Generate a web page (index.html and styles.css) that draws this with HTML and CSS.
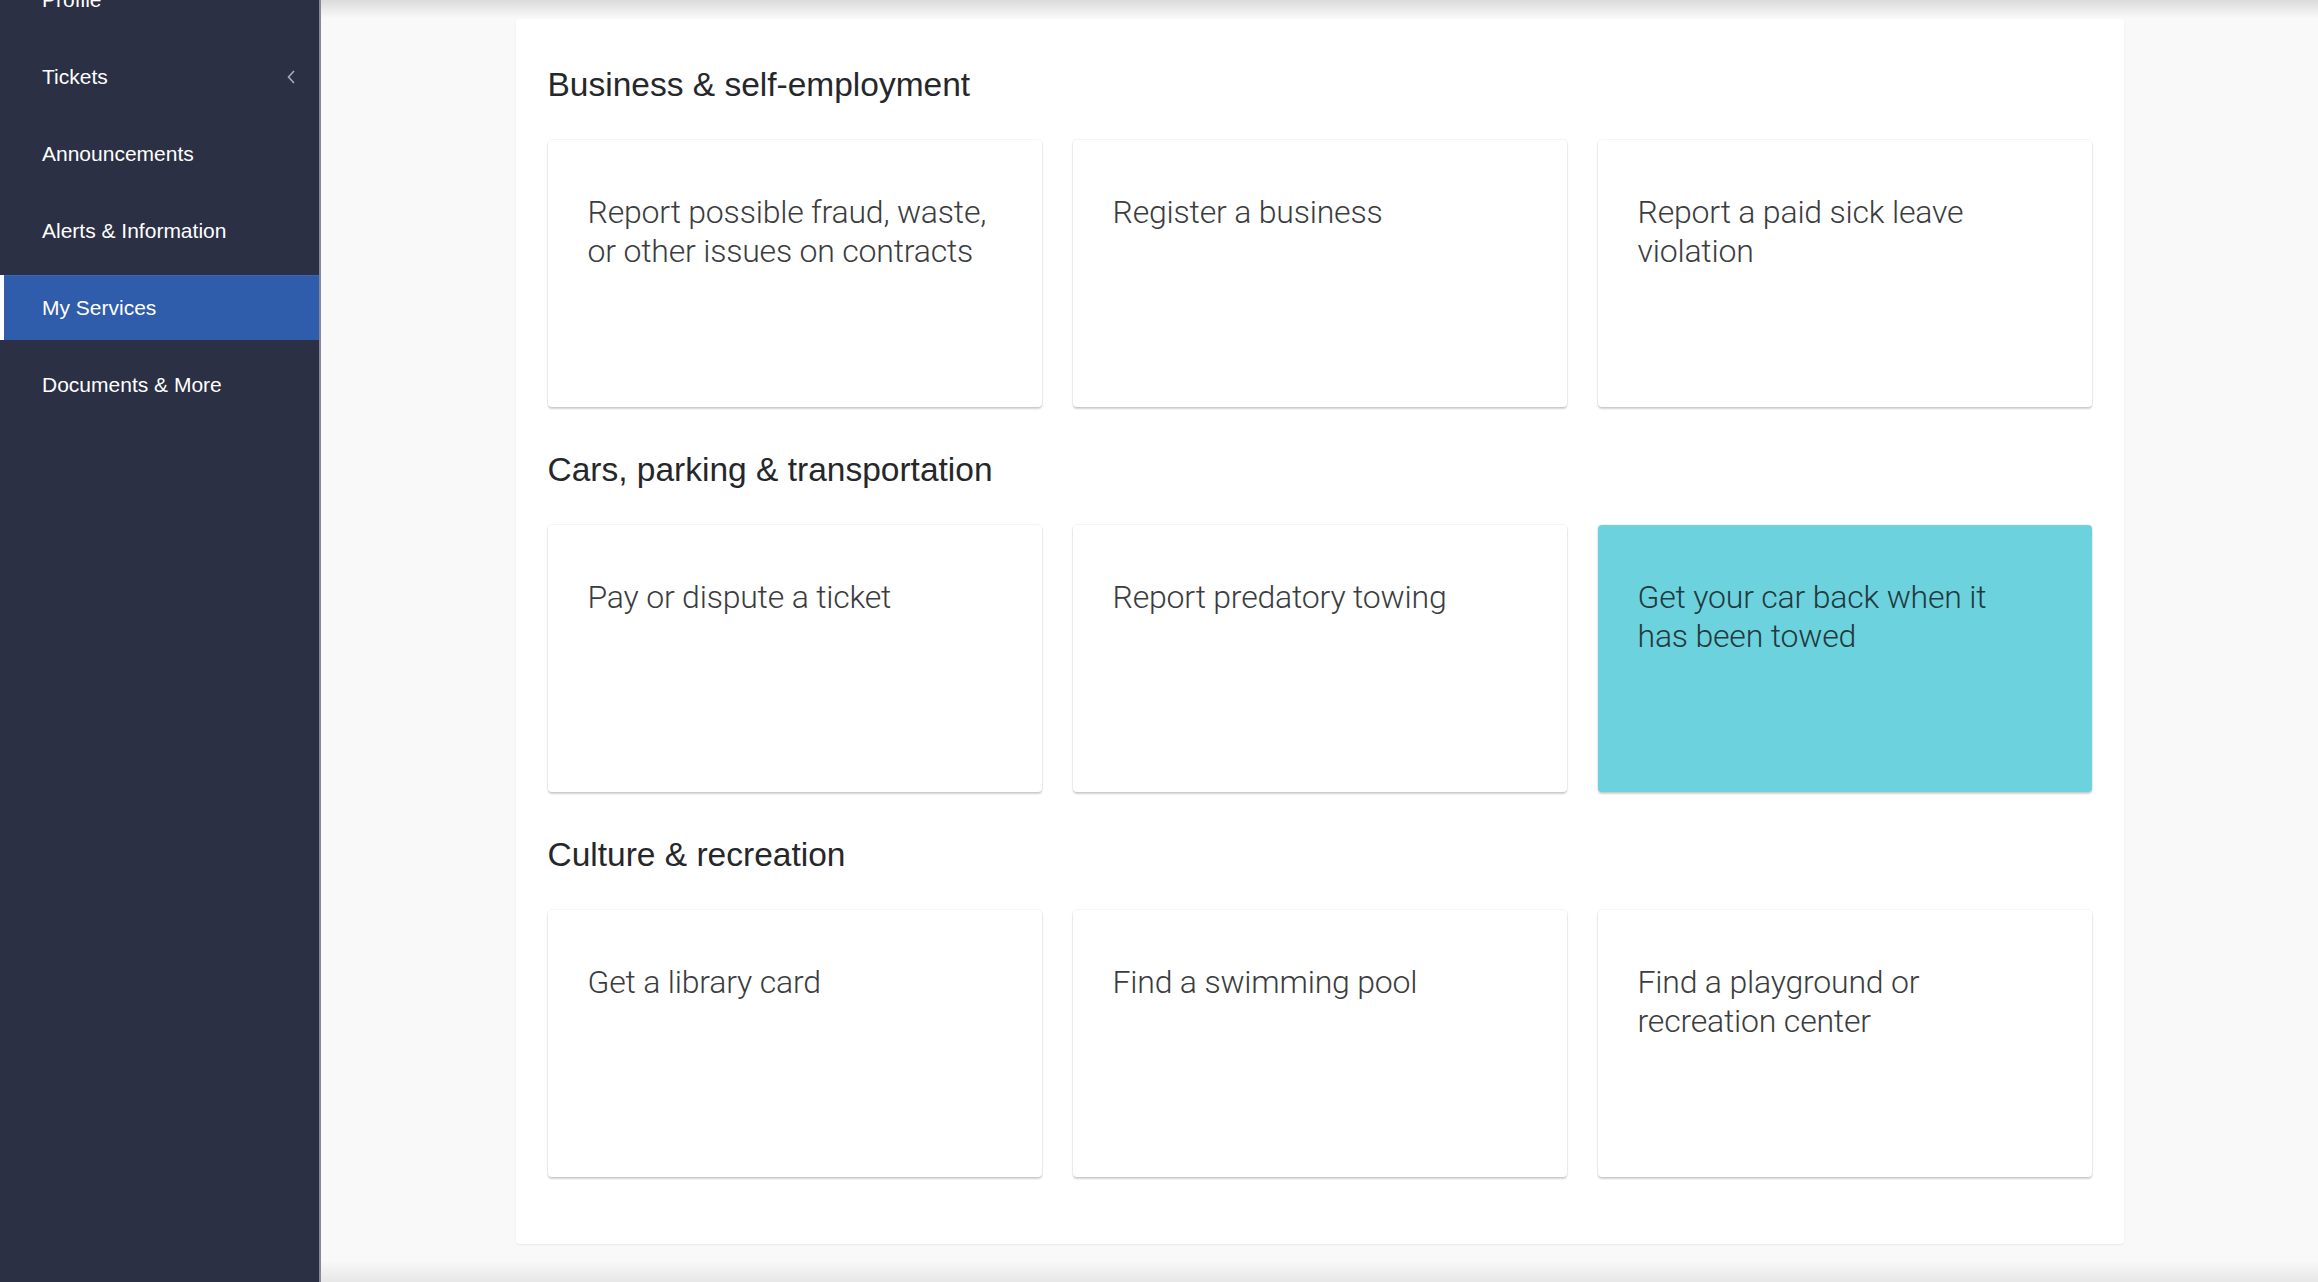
FILE: index.html
```html
<!DOCTYPE html>
<html lang="en">
<head>
<meta charset="utf-8">
<title>My Services</title>
<link rel="stylesheet" href="styles.css">
</head>
<body>
<div class="app">
  <aside class="sidebar">
    <ul class="nav">
      <li class="nav-item">Profile</li>
      <li class="nav-item has-sub">Tickets
        <svg class="chev" viewBox="0 0 10 16" width="10" height="16" aria-hidden="true"><path d="M8 2 L2.5 8 L8 14" fill="none" stroke="#a9adb9" stroke-width="1.6"/></svg>
      </li>
      <li class="nav-item">Announcements</li>
      <li class="nav-item">Alerts &amp; Information</li>
      <li class="nav-item active">My Services</li>
      <li class="nav-item">Documents &amp; More</li>
    </ul>
  </aside>
  <main class="main">
    <div class="panel">
      <section class="section">
        <h2 class="section-title">Business &amp; self-employment</h2>
        <div class="cards">
          <a class="card">Report possible fraud, waste, or other issues on contracts</a>
          <a class="card">Register a business</a>
          <a class="card">Report a paid sick leave violation</a>
        </div>
      </section>
      <section class="section">
        <h2 class="section-title">Cars, parking &amp; transportation</h2>
        <div class="cards">
          <a class="card">Pay or dispute a ticket</a>
          <a class="card">Report predatory towing</a>
          <a class="card card-hover">Get your car back when it has been towed</a>
        </div>
      </section>
      <section class="section">
        <h2 class="section-title">Culture &amp; recreation</h2>
        <div class="cards">
          <a class="card">Get a library card</a>
          <a class="card">Find a swimming pool</a>
          <a class="card">Find a playground or recreation center</a>
        </div>
      </section>
    </div>
  </main>
</div>
</body>
</html>
```
FILE: styles.css
```css
html, body {
  margin: 0;
  padding: 0;
  height: 100%;
}
body {
  font-family: "Liberation Sans", Arial, Helvetica, sans-serif;
  overflow: hidden;
}
.app {
  display: flex;
  height: 1282px;
}
.sidebar {
  width: 319px;
  flex: 0 0 319px;
  background: #2b3044;
  border-right: 2px solid #85889a;
  overflow: hidden;
}
.nav {
  list-style: none;
  margin: -33px 0 0 0;
  padding: 0;
}
.nav-item {
  height: 65px;
  margin-bottom: 12px;
  display: flex;
  align-items: center;
  padding: 0 23px 0 42px;
  color: #ffffff;
  font-size: 21px;
  box-sizing: border-box;
}
.nav-item.has-sub {
  justify-content: space-between;
}
.chev {
  display: block;
}
.nav-item.active {
  background: #2f5cab;
  border-left: 4px solid #ffffff;
  padding-left: 38px;
  box-shadow: inset 0 1px 0 #3a68b5;
}
.main {
  flex: 1;
  background:
    linear-gradient(to bottom, rgba(0,0,0,0.12), rgba(0,0,0,0) 18px),
    linear-gradient(to top, rgba(0,0,0,0.07), rgba(0,0,0,0) 22px),
    #f9f9f9;
  overflow: hidden;
}
.panel {
  width: 1608px;
  box-sizing: border-box;
  margin: 19px auto 0;
  background: #ffffff;
  border-radius: 4px;
  box-shadow: 0 1px 2px rgba(0,0,0,0.08);
  padding: 46px 32px 24px 32px;
}
.section-title {
  margin: 0 0 35px 0;
  font-size: 33.5px;
  line-height: 40px;
  font-weight: normal;
  color: #25272b;
}
.cards {
  display: grid;
  grid-template-columns: repeat(3, 1fr);
  column-gap: 31px;
  margin-bottom: 43px;
}
.card {
  display: block;
  height: 267px;
  box-sizing: border-box;
  padding: 53px 51px 0 40px;
  background: #ffffff;
  border-radius: 4px;
  box-shadow: 0 0 0 1px rgba(0,0,0,0.04), 0 2px 2px rgba(0,0,0,0.18);
  font-family: Roboto, "Liberation Sans", sans-serif;
  font-weight: 300;
  font-size: 32px;
  line-height: 39px;
  letter-spacing: -0.2px;
  color: #3a3c40;
  text-decoration: none;
}
.card-hover {
  background: #6cd3de;
  color: #23393d;
}
```
